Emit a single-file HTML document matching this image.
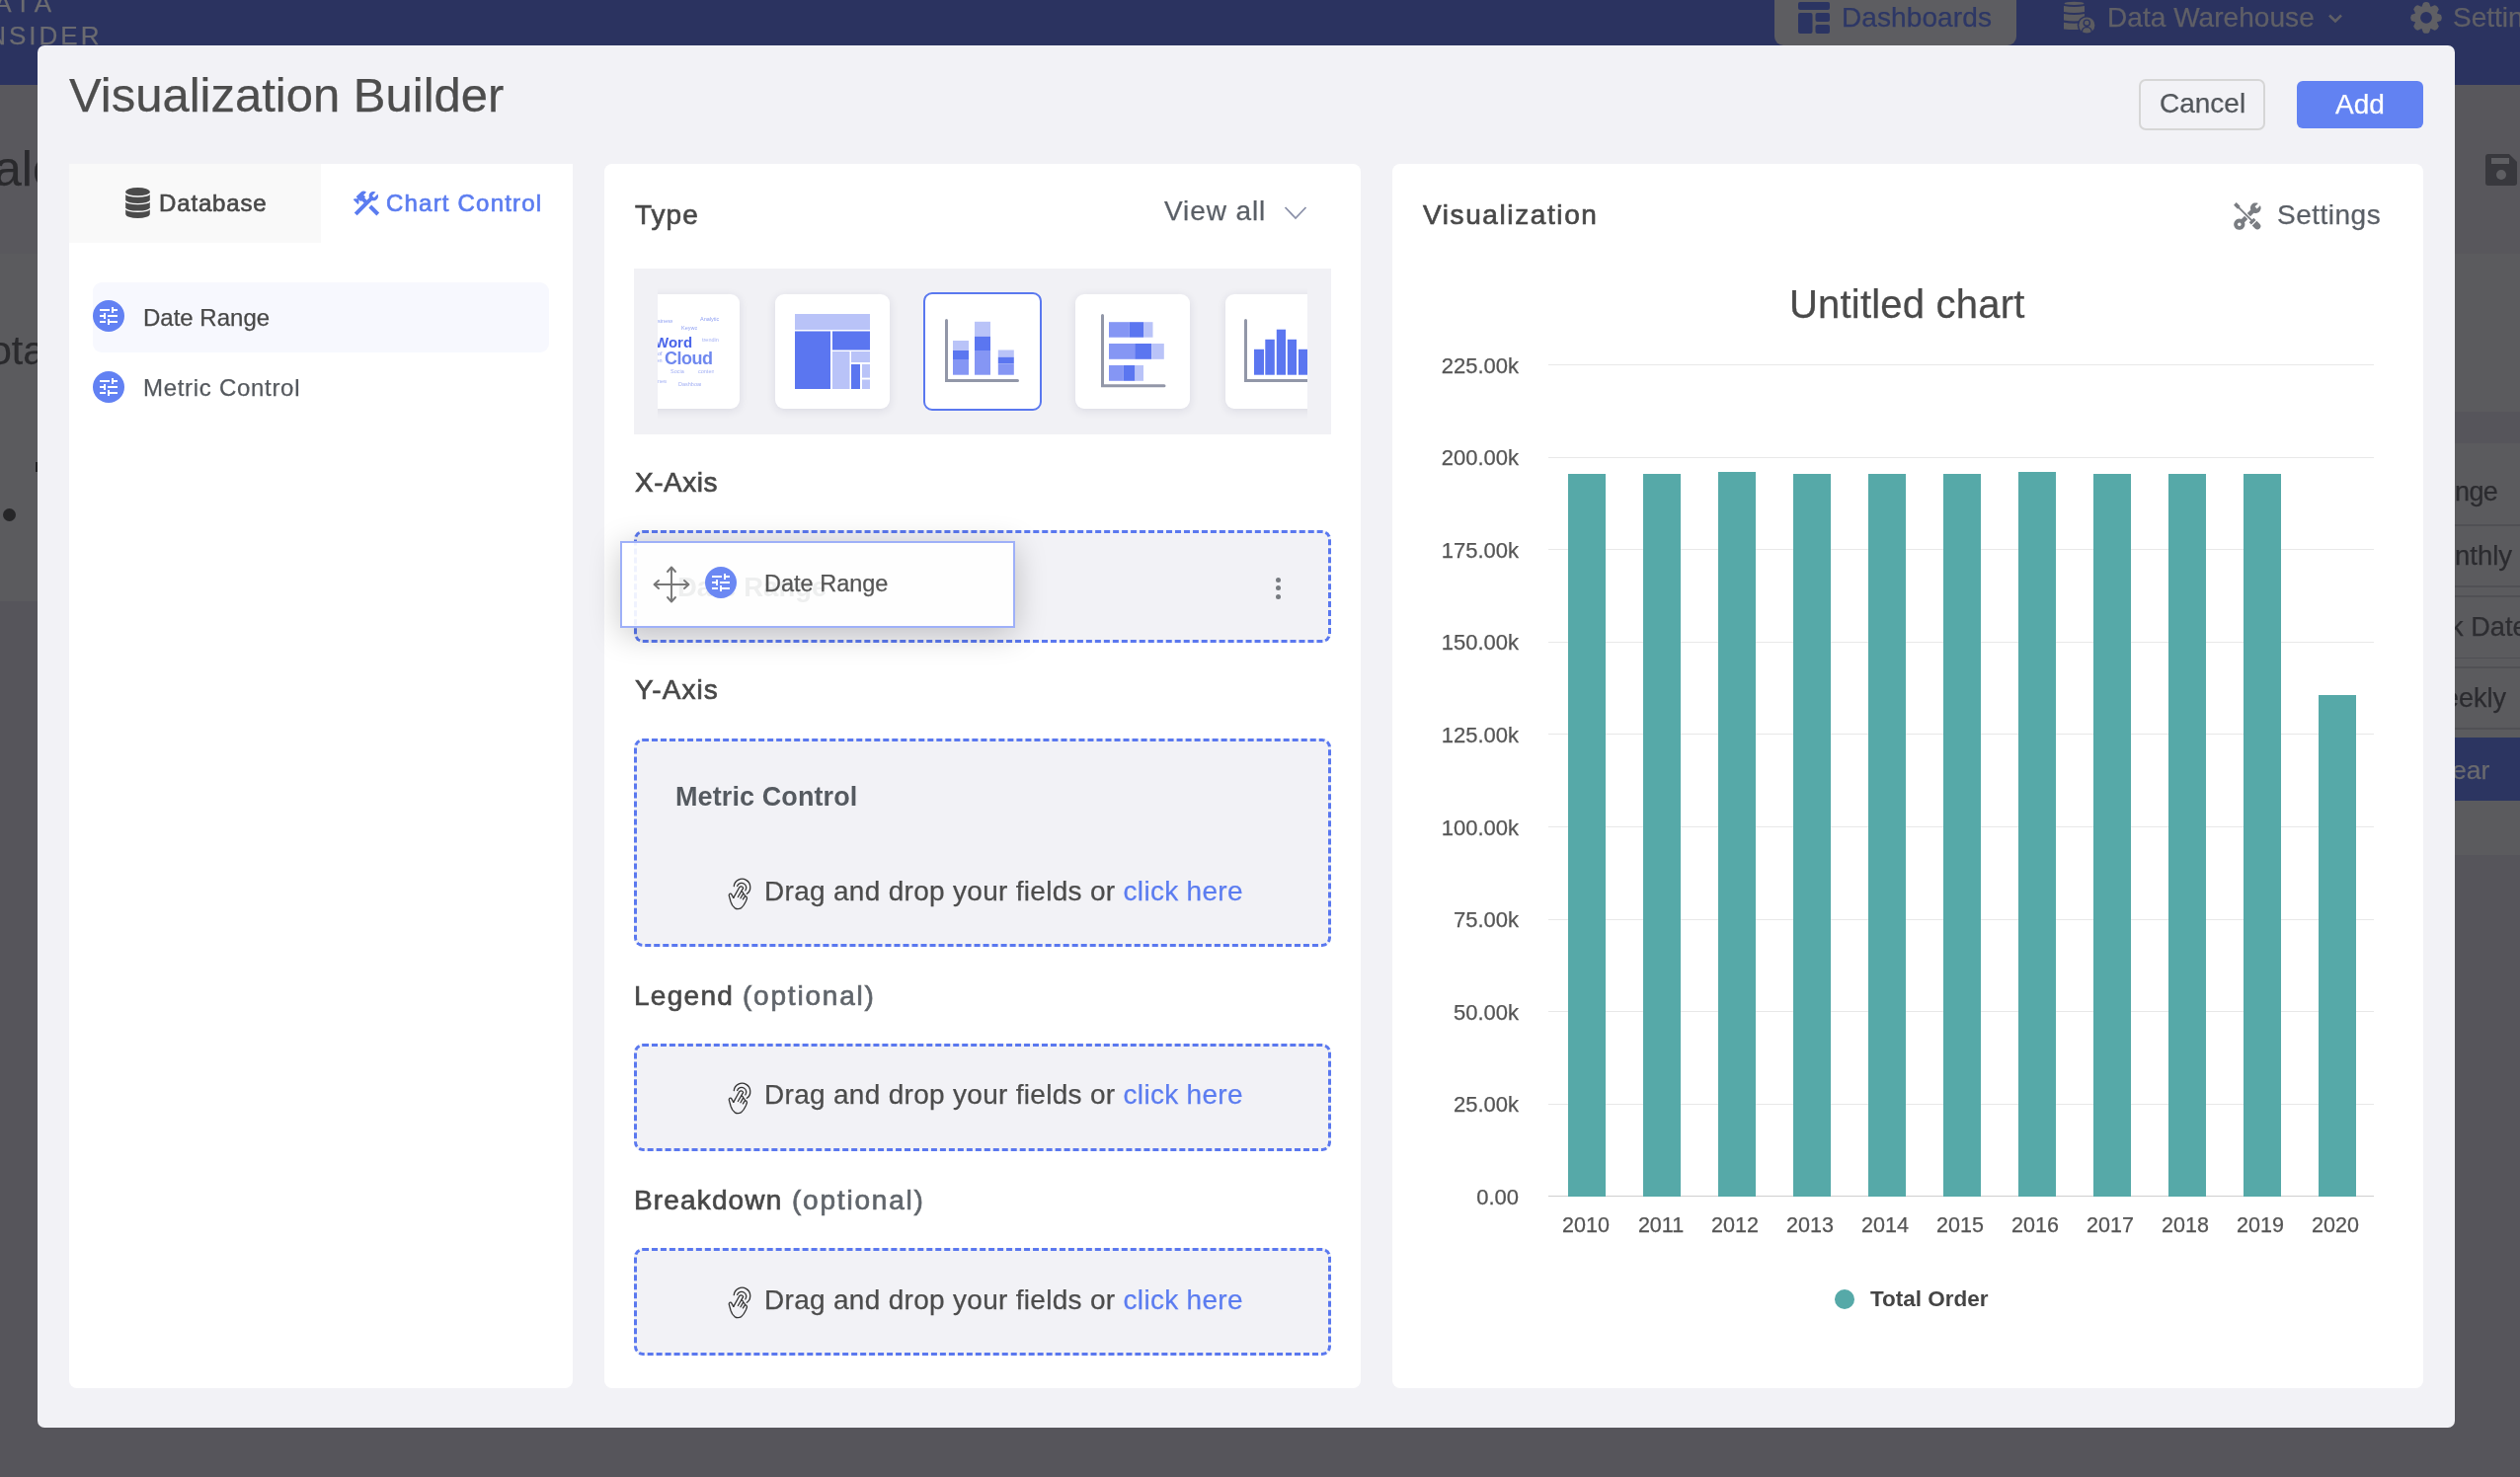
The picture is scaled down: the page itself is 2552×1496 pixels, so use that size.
<!DOCTYPE html>
<html><head><meta charset="utf-8"><style>
html,body{margin:0;padding:0;width:2552px;height:1496px;overflow:hidden;background:#56555b;font-family:'Liberation Sans', sans-serif;}
.t{position:absolute;white-space:nowrap;will-change:transform;-webkit-text-stroke:0.25px currentColor;}
.r{position:absolute;box-sizing:content-box;}
svg.r{display:block;}
</style></head><body>
<div class="r" style="left:0px;top:0px;width:2552px;height:86px;background:#2b3360;"></div>
<div class="r" style="left:0px;top:86px;width:2552px;height:1410px;background:#56555b;"></div>
<div class="r" style="left:0px;top:86px;width:38px;height:171px;background:#59585d;"></div>
<div class="r" style="left:0px;top:257px;width:38px;height:352px;background:#5b5b5e;"></div>
<div class="r" style="left:2486px;top:86px;width:66px;height:171px;background:#58575c;"></div>
<div class="r" style="left:2486px;top:257px;width:66px;height:160px;background:#5b5b5e;"></div>
<div class="r" style="left:2486px;top:417px;width:66px;height:32px;background:#56555b;"></div>
<div class="r" style="left:2486px;top:449px;width:66px;height:417px;background:#5b5b5e;"></div>
<div class="t" style="left:-30.0px;top:-9.6px;font-size:26px;line-height:26px;color:#6b6b70;font-weight:normal;letter-spacing:5.5px;">DATA</div>
<div class="t" style="left:-22.9px;top:22.6px;font-size:26px;line-height:26px;color:#6b6b70;font-weight:normal;letter-spacing:3.0px;">INSIDER</div>
<div class="r" style="left:1797px;top:-10px;width:245px;height:56px;background:#5d5d61;border-radius:0 0 9px 9px"></div>
<svg class="r" style="left:1821px;top:2px" width="32" height="32" viewBox="0 0 32 32" fill="#2b3462">
<rect x="0" y="0" width="32" height="8" rx="2"/><rect x="0" y="11" width="14.5" height="21" rx="2"/>
<rect x="17.5" y="11" width="14.5" height="9" rx="2"/><rect x="17.5" y="23" width="14.5" height="9" rx="2"/></svg>
<div class="t" style="left:1864.5px;top:4.0px;font-size:28px;line-height:28px;color:#2d3766;font-weight:normal;letter-spacing:0.1px;">Dashboards</div>
<svg class="r" style="left:2090px;top:0px" width="34" height="36" viewBox="0 0 34 36" fill="#5c5c60">
<ellipse cx="10.5" cy="3.4" rx="10" ry="1.7"/>
<path d="M0 6 Q10.5 8 21 6 V12 Q10.5 14 0 12 Z"/>
<path d="M0 14 Q10.5 16 21 14 V20.5 Q10.5 22.5 0 20.5 Z"/>
<path d="M0 22.8 Q10.5 24.8 21 22.8 V29.5 Q10.5 30.5 0 29.5 Z"/>
<circle cx="23.3" cy="25.5" r="9.6" fill="#2b3360"/>
<circle cx="23.3" cy="25.5" r="8.1"/>
<circle cx="23.3" cy="23.2" r="3.1" stroke="#2b3360" stroke-width="1.4"/>
<path d="M18.3 32 Q19 27.6 23.3 27.4 Q27.6 27.6 28.3 32" stroke="#2b3360" stroke-width="1.4"/>
</svg>
<div class="t" style="left:2133.5px;top:4.0px;font-size:28px;line-height:28px;color:#5f5f66;font-weight:normal;letter-spacing:0.05px;">Data Warehouse</div>
<svg class="r" style="left:2357px;top:12px" width="16" height="14" viewBox="0 0 16 14"><path d="M2 3.5 L8 9.5 L14 3.5" stroke="#5f5f66" stroke-width="2.6" fill="none"/></svg>
<svg class="r" style="left:2439px;top:0px" width="36" height="36" viewBox="-18 -18 36 36" fill="#5f5f64"><g transform="translate(0,-0.1)"><path d="M-5.2 -9 L-3 -15 Q0 -16.8 3 -15 L5.2 -9 Z" transform="rotate(0)"/><path d="M-5.2 -9 L-3 -15 Q0 -16.8 3 -15 L5.2 -9 Z" transform="rotate(45)"/><path d="M-5.2 -9 L-3 -15 Q0 -16.8 3 -15 L5.2 -9 Z" transform="rotate(90)"/><path d="M-5.2 -9 L-3 -15 Q0 -16.8 3 -15 L5.2 -9 Z" transform="rotate(135)"/><path d="M-5.2 -9 L-3 -15 Q0 -16.8 3 -15 L5.2 -9 Z" transform="rotate(180)"/><path d="M-5.2 -9 L-3 -15 Q0 -16.8 3 -15 L5.2 -9 Z" transform="rotate(225)"/><path d="M-5.2 -9 L-3 -15 Q0 -16.8 3 -15 L5.2 -9 Z" transform="rotate(270)"/><path d="M-5.2 -9 L-3 -15 Q0 -16.8 3 -15 L5.2 -9 Z" transform="rotate(315)"/><circle r="11.8"/><circle r="5.9" fill="#2b3360"/></g></svg>
<div class="t" style="left:2484.0px;top:4.0px;font-size:28px;line-height:28px;color:#5f5f66;font-weight:normal;letter-spacing:0px;">Settings</div>
<div class="t" style="left:-6.5px;top:145.8px;font-size:50px;line-height:50px;color:#2a2a2d;font-weight:normal;letter-spacing:0px;">alc</div>
<div class="t" style="left:-11.4px;top:334.6px;font-size:41px;line-height:41px;color:#2a2a2d;font-weight:normal;letter-spacing:0px;">ota</div>
<div class="r" style="left:35.5px;top:468px;width:3.5px;height:10px;background:#232325;"></div>
<div class="r" style="left:2.8px;top:514.6px;width:13px;height:13px;border-radius:50%;background:#262628"></div>
<svg class="r" style="left:2517px;top:156px" width="32" height="32" viewBox="0 0 32 32"><path d="M3 0 H24 L32 8 V29 A3 3 0 0 1 29 32 H3 A3 3 0 0 1 0 29 V3 A3 3 0 0 1 3 0 Z" fill="#38383d"/><rect x="6" y="4" width="18" height="6" fill="#5e5e62"/><circle cx="16" cy="21" r="5" fill="#5e5e62"/></svg>
<div class="t" style="left:2485.5px;top:485.1px;font-size:27px;line-height:27px;color:#2b2b2f;font-weight:normal;letter-spacing:-0.6px;">nge</div>
<div class="r" style="left:2486px;top:531px;width:66px;height:1.7999999999999545px;background:#505054;"></div>
<div class="t" style="left:2485.5px;top:548.6px;font-size:27.5px;line-height:27.5px;color:#2b2b2f;font-weight:normal;letter-spacing:0px;">nthly</div>
<div class="r" style="left:2486px;top:593px;width:66px;height:1.7999999999999545px;background:#505054;"></div>
<div class="r" style="left:2486px;top:603px;width:66px;height:1.7999999999999545px;background:#505054;"></div>
<div class="t" style="left:2481.1px;top:620.8px;font-size:27.2px;line-height:27.2px;color:#2d2d31;font-weight:normal;letter-spacing:0px;">k Date</div>
<div class="r" style="left:2486px;top:665.5px;width:66px;height:1.7000000000000455px;background:#505054;"></div>
<div class="r" style="left:2486px;top:675px;width:66px;height:1.7999999999999545px;background:#505054;"></div>
<div class="t" style="left:2474.8px;top:693.6px;font-size:27px;line-height:27px;color:#2b2b2f;font-weight:normal;letter-spacing:0px;">eekly</div>
<div class="r" style="left:2486px;top:737px;width:66px;height:1.7999999999999545px;background:#505054;"></div>
<div class="r" style="left:2486px;top:747px;width:66px;height:64px;background:#2c3561;"></div>
<div class="t" style="left:2483.2px;top:766.5px;font-size:26.5px;line-height:26.5px;color:#6a6a6e;font-weight:normal;letter-spacing:0px;">ear</div>
<div class="r" style="left:38px;top:46px;width:2448px;height:1400px;background:#f2f2f6;border-radius:7px"></div>
<div class="t" style="left:70.0px;top:72.1px;font-size:49px;line-height:49px;color:#4d4d4d;font-weight:normal;letter-spacing:0px;">Visualization Builder</div>
<div class="r" style="left:2166px;top:80px;width:123.5px;height:47.6px;border:2px solid #d6d6d6;border-radius:7px;background:#f2f2f6"></div>
<div class="t" style="left:2186.5px;top:91.4px;font-size:28px;line-height:28px;color:#53575c;font-weight:normal;letter-spacing:0px;">Cancel</div>
<div class="r" style="left:2326px;top:82px;width:128px;height:48px;background:#6282f2;border-radius:6px"></div>
<div class="t" style="left:2365.0px;top:91.8px;font-size:28px;line-height:28px;color:#ffffff;font-weight:normal;letter-spacing:0px;">Add</div>
<div class="r" style="left:70px;top:166px;width:510px;height:1240px;background:#fff;border-radius:0 0 8px 8px;overflow:hidden"><div class="r" style="left:0;top:0;width:255px;height:80px;background:#f9f9f9"></div></div>
<svg class="r" style="left:127px;top:190px" width="25" height="31" viewBox="0 0 25 31">
<path d="M0.2 4.3 A12.3 4.3 0 0 1 24.8 4.3 V26.7 A12.3 4.3 0 0 1 0.2 26.7 Z" fill="#4a4a4a"/>
<path d="M0 5.6 A12.5 3.4 0 0 0 25 5.6 M0 13.2 A12.5 3.4 0 0 0 25 13.2 M0 20.9 A12.5 3.4 0 0 0 25 20.9" stroke="#f9f9f9" stroke-width="1.4" fill="none"/></svg>
<div class="t" style="left:161.0px;top:194.2px;font-size:24px;line-height:24px;color:#484848;font-weight:normal;letter-spacing:0.85px;-webkit-text-stroke:0.65px #484848;">Database</div>
<svg class="r" style="left:355px;top:189.7px" width="32" height="32" viewBox="0 0 24 24"><path fill="#5b7cf0" d="M13.78 15.3l6 6 2.11-2.16-6-6-2.11 2.16zM17.5 10c1.93 0 3.5-1.57 3.5-3.5 0-.58-.16-1.12-.41-1.6l-2.7 2.7-1.49-1.49 2.7-2.7c-.48-.25-1.02-.41-1.6-.41C15.57 3 14 4.57 14 6.5c0 .41.08.8.21 1.16l-1.85 1.85-1.78-1.78.71-.71-1.41-1.41L12 3.49c-1.17-1.17-3.07-1.17-4.24 0L4.22 7.03l1.41 1.41H2.81l-.71.71 3.54 3.54.71-.71V9.15l1.41 1.41.71-.71 1.78 1.78-7.41 7.41 2.12 2.12L16.34 9.79c.36.13.75.21 1.16.21z"/></svg>
<div class="t" style="left:391.0px;top:194.2px;font-size:24px;line-height:24px;color:#5b7cf0;font-weight:normal;letter-spacing:1.2px;-webkit-text-stroke:0.65px #5b7cf0;">Chart Control</div>
<div class="r" style="left:94px;top:286px;width:462px;height:71px;background:#f7f8fe;border-radius:9px"></div>
<svg class="r" style="left:94px;top:304px" width="32" height="32" viewBox="0 0 32 32"><circle cx="16" cy="16" r="16" fill="#6281f3"/>
<g transform="translate(4,4)"><path fill="#fff" d="M3 17v2h6v-2H3zM3 5v2h10V5H3zm10 16v-2h8v-2h-8v-2h-2v6h2zM7 9v2H3v2h4v2h2V9H7zm14 4v-2H11v2h10zm-6-4h2V7h4V5h-4V3h-2v6z"/></g></svg>
<div class="t" style="left:145.0px;top:309.9px;font-size:24px;line-height:24px;color:#484848;font-weight:normal;letter-spacing:0px;">Date Range</div>
<svg class="r" style="left:94px;top:376px" width="32" height="32" viewBox="0 0 32 32"><circle cx="16" cy="16" r="16" fill="#6281f3"/>
<g transform="translate(4,4)"><path fill="#fff" d="M3 17v2h6v-2H3zM3 5v2h10V5H3zm10 16v-2h8v-2h-8v-2h-2v6h2zM7 9v2H3v2h4v2h2V9H7zm14 4v-2H11v2h10zm-6-4h2V7h4V5h-4V3h-2v6z"/></g></svg>
<div class="t" style="left:145.0px;top:381.4px;font-size:24px;line-height:24px;color:#55595e;font-weight:normal;letter-spacing:0.7px;">Metric Control</div>
<div class="r" style="left:612px;top:166px;width:766px;height:1240px;background:#fff;border-radius:8px"></div>
<div class="t" style="left:643.0px;top:204.4px;font-size:28px;line-height:28px;color:#484848;font-weight:normal;letter-spacing:1.0px;-webkit-text-stroke:0.65px #484848;">Type</div>
<div class="t" style="left:1179.0px;top:200.4px;font-size:28px;line-height:28px;color:#5a5f66;font-weight:normal;letter-spacing:0.9px;">View all</div>
<svg class="r" style="left:1300px;top:208px" width="24" height="16" viewBox="0 0 24 16"><path d="M1.5 2 L12 13 L22.5 2" stroke="#8a90a8" stroke-width="1.8" fill="none"/></svg>
<div class="r" style="left:642px;top:272px;width:706px;height:168px;background:#f1f1f5;"></div>
<div class="r" style="left:666px;top:272px;width:658px;height:168px;overflow:hidden">
<div style="position:absolute;top:26px;width:116px;height:116px;background:#fff;border-radius:9px;box-shadow:0 2px 10px rgba(40,40,80,0.11);left:-33px;overflow:hidden">
<div class="t" style="left:29.6px;top:41.35px;font-size:15px;line-height:15px;color:#4b66ea;font-weight:bold;-webkit-text-stroke:0">Word</div>
<div class="t" style="left:40px;top:55.7px;font-size:18px;line-height:18px;color:#6f88ef;font-weight:bold;letter-spacing:-0.5px;-webkit-text-stroke:0">Cloud</div>
<div class="t" style="left:27px;top:25px;font-size:5.5px;line-height:5.5px;color:#8e9ff2;width:21.200000000000003px;overflow:hidden;-webkit-text-stroke:0">business</div>
<div class="t" style="left:76px;top:23px;font-size:5.5px;line-height:5.5px;color:#8e9ff2;width:18.700000000000003px;overflow:hidden;-webkit-text-stroke:0">Analytics</div>
<div class="t" style="left:57px;top:32px;font-size:5.5px;line-height:5.5px;color:#8e9ff2;width:16px;overflow:hidden;-webkit-text-stroke:0">Keyword</div>
<div class="t" style="left:77.8px;top:43.5px;font-size:5.5px;line-height:5.5px;color:#a3b0f4;width:16.900000000000006px;overflow:hidden;-webkit-text-stroke:0">trending</div>
<div class="t" style="left:33px;top:57.5px;font-size:5.5px;line-height:5.5px;color:#8e9ff2;width:6px;overflow:hidden;-webkit-text-stroke:0">of</div>
<div class="t" style="left:30px;top:65px;font-size:5.5px;line-height:5.5px;color:#8e9ff2;width:9px;overflow:hidden;-webkit-text-stroke:0">ten</div>
<div class="t" style="left:46px;top:76px;font-size:5.5px;line-height:5.5px;color:#a3b0f4;width:13.600000000000001px;overflow:hidden;-webkit-text-stroke:0">Social</div>
<div class="t" style="left:74px;top:76px;font-size:5.5px;line-height:5.5px;color:#a3b0f4;width:16px;overflow:hidden;-webkit-text-stroke:0">content</div>
<div class="t" style="left:33px;top:86px;font-size:5.5px;line-height:5.5px;color:#a3b0f4;width:8.799999999999997px;overflow:hidden;-webkit-text-stroke:0">newy</div>
<div class="t" style="left:54px;top:89px;font-size:5.5px;line-height:5.5px;color:#a3b0f4;width:23px;overflow:hidden;-webkit-text-stroke:0">Dashboard</div>
</div>
<div style="position:absolute;top:26px;width:116px;height:116px;background:#fff;border-radius:9px;box-shadow:0 2px 10px rgba(40,40,80,0.11);left:119px"><svg style="position:absolute;left:20px;top:20px" width="76" height="76" viewBox="0 0 76 76"><rect x="0" y="0" width="76" height="16" fill="#b9c3f8"/><rect x="0" y="17.5" width="36" height="58.5" fill="#5b76f0"/><rect x="38" y="17.5" width="38" height="19" fill="#5b76f0"/><rect x="38" y="38" width="17.5" height="38" fill="#b9c3f8"/><rect x="57" y="38" width="19" height="11" fill="#b9c3f8"/><rect x="57" y="51" width="9" height="25" fill="#5b76f0"/><rect x="68" y="51" width="8" height="13.6" fill="#b9c3f8"/><rect x="68" y="66.5" width="8" height="9.5" fill="#b9c3f8"/></svg></div>
<div style="position:absolute;top:26px;width:116px;height:116px;background:#fff;border-radius:9px;box-shadow:0 2px 10px rgba(40,40,80,0.11);left:269px;top:24px;width:116px;height:116px;border:2px solid #5a78ef;box-shadow:none"><svg style="position:absolute;left:20px;top:25px" width="80" height="70" viewBox="0 0 80 70"><path d="M1.5 1.5 V62.5 H73.5" stroke="#9297a8" stroke-width="3" stroke-linecap="round" fill="none"/><rect x="8" y="22" width="16" height="10" fill="#b9c3f8"/><rect x="8" y="32" width="16" height="9" fill="#5b76f0"/><rect x="8" y="41" width="16" height="15.7" fill="#8596f4"/><rect x="30" y="2.8" width="16" height="15" fill="#b9c3f8"/><rect x="30" y="17.8" width="16" height="14.2" fill="#5b76f0"/><rect x="30" y="32" width="16" height="24.7" fill="#8596f4"/><rect x="53.8" y="31.5" width="16" height="7.2" fill="#b9c3f8"/><rect x="53.8" y="38.7" width="16" height="6.6" fill="#5b76f0"/><rect x="53.8" y="45.3" width="16" height="11.4" fill="#8596f4"/></svg></div>
<div style="position:absolute;top:26px;width:116px;height:116px;background:#fff;border-radius:9px;box-shadow:0 2px 10px rgba(40,40,80,0.11);left:423px"><svg style="position:absolute;left:26px;top:20px" width="72" height="80" viewBox="0 0 72 80"><path d="M1.5 1.5 V72.8 H64" stroke="#9297a8" stroke-width="3" stroke-linecap="round" fill="none"/><rect x="8" y="8.2" width="20.8" height="15.5" fill="#8596f4"/><rect x="28.8" y="8.2" width="14.2" height="15.5" fill="#5b76f0"/><rect x="43" y="8.2" width="9.5" height="15.5" fill="#b9c3f8"/><rect x="8" y="30" width="26.2" height="15.8" fill="#8596f4"/><rect x="34.2" y="30" width="17.1" height="15.8" fill="#5b76f0"/><rect x="51.3" y="30" width="12.5" height="15.8" fill="#b9c3f8"/><rect x="8" y="52" width="14.8" height="15.8" fill="#8596f4"/><rect x="22.8" y="52" width="11.7" height="15.8" fill="#5b76f0"/><rect x="34.5" y="52" width="8.5" height="15.8" fill="#b9c3f8"/></svg></div>
<div style="position:absolute;top:26px;width:116px;height:116px;background:#fff;border-radius:9px;box-shadow:0 2px 10px rgba(40,40,80,0.11);left:575px"><svg style="position:absolute;left:19px;top:25px" width="97" height="66" viewBox="0 0 97 66"><path d="M1.5 1.5 V62.5 H120" stroke="#9297a8" stroke-width="3" stroke-linecap="round" fill="none"/><rect x="10" y="30.8" width="10" height="25.9" fill="#5b76f0"/><rect x="21.3" y="20.8" width="9.5" height="35.9" fill="#5b76f0"/><rect x="32.8" y="10.7" width="9.2" height="46" fill="#5b76f0"/><rect x="43.8" y="20.8" width="9.2" height="35.9" fill="#5b76f0"/><rect x="55" y="30.8" width="10" height="25.9" fill="#5b76f0"/></svg></div>
</div>
<div class="t" style="left:643.0px;top:474.6px;font-size:28px;line-height:28px;color:#484848;font-weight:normal;letter-spacing:0.5px;-webkit-text-stroke:0.65px #484848;">X-Axis</div>
<div class="r" style="left:642px;top:537px;width:700px;height:108px;border:3px dashed #5a78ef;border-radius:9px;background:#f2f2f6"></div>
<div class="r" style="left:1291.5px;top:584.5px;width:5px;height:5px;border-radius:50%;background:#777b80"></div>
<div class="r" style="left:1291.5px;top:593.2px;width:5px;height:5px;border-radius:50%;background:#777b80"></div>
<div class="r" style="left:1291.5px;top:602.1px;width:5px;height:5px;border-radius:50%;background:#777b80"></div>
<div class="r" style="left:628px;top:548px;width:396px;height:84px;border:2px solid #9eb0f8;background:rgba(255,255,255,0.9);box-shadow:0 6px 32px rgba(0,0,0,0.22)"></div>
<div class="t" style="left:686.0px;top:581.1px;font-size:27.5px;line-height:27.5px;color:#eeefef;font-weight:bold;letter-spacing:0px;-webkit-text-stroke:0;">Date Range</div>
<svg class="r" style="left:660px;top:572px" width="40" height="40" viewBox="0 0 40 40"><g stroke="#777" stroke-width="1.9" fill="none" stroke-linecap="round" stroke-linejoin="round">
<path d="M20 3 V37 M3 20 H37"/><path d="M16 7 L20 2.5 L24 7"/><path d="M16 33 L20 37.5 L24 33"/><path d="M7 16 L2.5 20 L7 24"/><path d="M33 16 L37.5 20 L33 24"/></g></svg>
<svg class="r" style="left:714px;top:574px" width="32" height="32" viewBox="0 0 32 32"><circle cx="16" cy="16" r="16" fill="#6b88f3"/>
<g transform="translate(4,4)"><path fill="#fff" d="M3 17v2h6v-2H3zM3 5v2h10V5H3zm10 16v-2h8v-2h-8v-2h-2v6h2zM7 9v2H3v2h4v2h2V9H7zm14 4v-2H11v2h10zm-6-4h2V7h4V5h-4V3h-2v6z"/></g></svg>
<div class="t" style="left:773.7px;top:580.3px;font-size:23.5px;line-height:23.5px;color:#555555;font-weight:normal;letter-spacing:0px;">Date Range</div>
<div class="t" style="left:643.0px;top:684.8px;font-size:28px;line-height:28px;color:#484848;font-weight:normal;letter-spacing:1.1px;-webkit-text-stroke:0.65px #484848;">Y-Axis</div>
<div class="r" style="left:642px;top:748px;width:700px;height:205px;border:3px dashed #5a78ef;border-radius:9px;background:#f2f2f6"></div>
<div class="t" style="left:684.0px;top:793.6px;font-size:27px;line-height:27px;color:#555a60;font-weight:bold;letter-spacing:0.1px;-webkit-text-stroke:0;">Metric Control</div>
<div class="t" style="left:773.7px;top:888.9px;font-size:28px;line-height:28px;color:#4c4c4c;letter-spacing:0.3px">Drag and drop your fields or <span style="color:#5b7cf0">click here</span></div>
<svg class="r" style="left:730px;top:880px" width="40" height="45" viewBox="0 0 1313 1477"><g stroke="#333" stroke-width="42" fill="none" stroke-linecap="round" stroke-linejoin="round">
<path d="M435 580 A272 272 0 1 1 865 830"/>
<path d="M545 575 A155 155 0 1 1 815 720"/>
<path d="M420 965 L615 615 Q680 555 745 635 L570 935"/>
<path d="M690 752 Q735 770 748 815 L655 975"/>
<path d="M748 835 Q795 850 805 905 L735 1015"/>
<path d="M805 905 Q865 915 870 975 L830 1080 Q760 1230 680 1300 Q560 1370 460 1300 Q370 1230 330 1100 L270 880 Q285 805 345 835 L420 965"/>
</g></svg>
<div class="t" style="left:641.5px;top:994.9px;font-size:28px;line-height:28px;color:#484848;font-weight:normal;letter-spacing:1.3px;-webkit-text-stroke:0.65px #484848;">Legend</div>
<div class="t" style="left:751.5px;top:994.9px;font-size:28px;line-height:28px;color:#60656b;font-weight:normal;letter-spacing:1.8px;-webkit-text-stroke:0.65px #60656b;">(optional)</div>
<div class="r" style="left:642px;top:1057px;width:700px;height:103px;border:3px dashed #5a78ef;border-radius:9px;background:#f2f2f6"></div>
<div class="t" style="left:773.7px;top:1095.4px;font-size:28px;line-height:28px;color:#4c4c4c;letter-spacing:0.3px">Drag and drop your fields or <span style="color:#5b7cf0">click here</span></div>
<svg class="r" style="left:730px;top:1086.5px" width="40" height="45" viewBox="0 0 1313 1477"><g stroke="#333" stroke-width="42" fill="none" stroke-linecap="round" stroke-linejoin="round">
<path d="M435 580 A272 272 0 1 1 865 830"/>
<path d="M545 575 A155 155 0 1 1 815 720"/>
<path d="M420 965 L615 615 Q680 555 745 635 L570 935"/>
<path d="M690 752 Q735 770 748 815 L655 975"/>
<path d="M748 835 Q795 850 805 905 L735 1015"/>
<path d="M805 905 Q865 915 870 975 L830 1080 Q760 1230 680 1300 Q560 1370 460 1300 Q370 1230 330 1100 L270 880 Q285 805 345 835 L420 965"/>
</g></svg>
<div class="t" style="left:641.5px;top:1202.0px;font-size:28px;line-height:28px;color:#484848;font-weight:normal;letter-spacing:1.15px;-webkit-text-stroke:0.65px #484848;">Breakdown</div>
<div class="t" style="left:802.0px;top:1202.0px;font-size:28px;line-height:28px;color:#60656b;font-weight:normal;letter-spacing:1.8px;-webkit-text-stroke:0.65px #60656b;">(optional)</div>
<div class="r" style="left:642px;top:1264px;width:700px;height:103px;border:3px dashed #5a78ef;border-radius:9px;background:#f2f2f6"></div>
<div class="t" style="left:773.7px;top:1303.0px;font-size:28px;line-height:28px;color:#4c4c4c;letter-spacing:0.3px">Drag and drop your fields or <span style="color:#5b7cf0">click here</span></div>
<svg class="r" style="left:730px;top:1294.1px" width="40" height="45" viewBox="0 0 1313 1477"><g stroke="#333" stroke-width="42" fill="none" stroke-linecap="round" stroke-linejoin="round">
<path d="M435 580 A272 272 0 1 1 865 830"/>
<path d="M545 575 A155 155 0 1 1 815 720"/>
<path d="M420 965 L615 615 Q680 555 745 635 L570 935"/>
<path d="M690 752 Q735 770 748 815 L655 975"/>
<path d="M748 835 Q795 850 805 905 L735 1015"/>
<path d="M805 905 Q865 915 870 975 L830 1080 Q760 1230 680 1300 Q560 1370 460 1300 Q370 1230 330 1100 L270 880 Q285 805 345 835 L420 965"/>
</g></svg>
<div class="r" style="left:1410px;top:166px;width:1044px;height:1240px;background:#fff;border-radius:8px"></div>
<div class="t" style="left:1441.0px;top:204.1px;font-size:28px;line-height:28px;color:#484848;font-weight:normal;letter-spacing:1.6px;-webkit-text-stroke:0.65px #484848;">Visualization</div>
<svg class="r" style="left:2261.6px;top:204.75px" width="29" height="29" viewBox="0 0 29 29" fill="#7a7d82">
<g transform="rotate(45)">
<path d="M2 -1.9 H7.6 V1.9 H2 Z M7.5 -0.9 H26 V0.9 H7.5 Z M25.5 -3.3 H28.6 V3.3 H25.5 Z M29.8 -3.3 H34 A3.3 3.3 0 0 1 34 3.3 H29.8 Z"/>
</g>
<g transform="translate(28,0) rotate(135)">
<path d="M8.1 -5.3 A5.3 5.3 0 1 1 8.09 -5.3 Z"/><path fill="#fff" d="M1.5 -1.5 H7.6 V1.5 H1.5 Z"/>
<path d="M11 -2.2 H17.9 V2.2 H11 Z M21.7 -2.2 H27 V2.2 H21.7 Z"/>
<path fill-rule="evenodd" d="M31.4 -5.6 A5.6 5.6 0 1 1 31.39 -5.6 Z M31.4 -1.8 A1.8 1.8 0 1 0 31.41 -1.8 Z"/>
</g></svg>
<div class="t" style="left:2305.8px;top:204.0px;font-size:28px;line-height:28px;color:#5a5f66;font-weight:normal;letter-spacing:0.5px;">Settings</div>
<div class="t" style="left:1811.5px;top:288.3px;font-size:40px;line-height:40px;color:#4a4a4a;font-weight:normal;letter-spacing:0.2px;">Untitled chart</div>
<div class="r" style="left:1568px;top:369px;width:836px;height:1px;background:#e8e8e8;"></div>
<div class="t" style="left:1338px;width:200px;text-align:right;top:359.6px;font-size:22px;line-height:22px;color:#555">225.00k</div>
<div class="r" style="left:1568px;top:463px;width:836px;height:1px;background:#e8e8e8;"></div>
<div class="t" style="left:1338px;width:200px;text-align:right;top:453.2px;font-size:22px;line-height:22px;color:#555">200.00k</div>
<div class="r" style="left:1568px;top:556px;width:836px;height:1px;background:#e8e8e8;"></div>
<div class="t" style="left:1338px;width:200px;text-align:right;top:546.8px;font-size:22px;line-height:22px;color:#555">175.00k</div>
<div class="r" style="left:1568px;top:650px;width:836px;height:1px;background:#e8e8e8;"></div>
<div class="t" style="left:1338px;width:200px;text-align:right;top:640.4px;font-size:22px;line-height:22px;color:#555">150.00k</div>
<div class="r" style="left:1568px;top:743px;width:836px;height:1px;background:#e8e8e8;"></div>
<div class="t" style="left:1338px;width:200px;text-align:right;top:734.0px;font-size:22px;line-height:22px;color:#555">125.00k</div>
<div class="r" style="left:1568px;top:837px;width:836px;height:1px;background:#e8e8e8;"></div>
<div class="t" style="left:1338px;width:200px;text-align:right;top:827.6px;font-size:22px;line-height:22px;color:#555">100.00k</div>
<div class="r" style="left:1568px;top:931px;width:836px;height:1px;background:#e8e8e8;"></div>
<div class="t" style="left:1338px;width:200px;text-align:right;top:921.2px;font-size:22px;line-height:22px;color:#555">75.00k</div>
<div class="r" style="left:1568px;top:1024px;width:836px;height:1px;background:#e8e8e8;"></div>
<div class="t" style="left:1338px;width:200px;text-align:right;top:1014.8px;font-size:22px;line-height:22px;color:#555">50.00k</div>
<div class="r" style="left:1568px;top:1118px;width:836px;height:1px;background:#e8e8e8;"></div>
<div class="t" style="left:1338px;width:200px;text-align:right;top:1108.4px;font-size:22px;line-height:22px;color:#555">25.00k</div>
<div class="r" style="left:1568px;top:1211px;width:836px;height:1px;background:#cfcfcf;"></div>
<div class="t" style="left:1338px;width:200px;text-align:right;top:1202.0px;font-size:22px;line-height:22px;color:#555">0.00</div>
<div class="r" style="left:1588.0px;top:480px;width:38px;height:732px;background:#56a9a8"></div>
<div class="t" style="left:1555.5px;width:100px;text-align:center;top:1230.8px;font-size:21.5px;line-height:21.5px;color:#555">2010</div>
<div class="r" style="left:1664.0px;top:480px;width:38px;height:732px;background:#56a9a8"></div>
<div class="t" style="left:1631.5px;width:100px;text-align:center;top:1230.8px;font-size:21.5px;line-height:21.5px;color:#555">2011</div>
<div class="r" style="left:1739.9px;top:478px;width:38px;height:734px;background:#56a9a8"></div>
<div class="t" style="left:1707.4px;width:100px;text-align:center;top:1230.8px;font-size:21.5px;line-height:21.5px;color:#555">2012</div>
<div class="r" style="left:1815.9px;top:480px;width:38px;height:732px;background:#56a9a8"></div>
<div class="t" style="left:1783.4px;width:100px;text-align:center;top:1230.8px;font-size:21.5px;line-height:21.5px;color:#555">2013</div>
<div class="r" style="left:1891.9px;top:480px;width:38px;height:732px;background:#56a9a8"></div>
<div class="t" style="left:1859.4px;width:100px;text-align:center;top:1230.8px;font-size:21.5px;line-height:21.5px;color:#555">2014</div>
<div class="r" style="left:1967.8px;top:480px;width:38px;height:732px;background:#56a9a8"></div>
<div class="t" style="left:1935.3px;width:100px;text-align:center;top:1230.8px;font-size:21.5px;line-height:21.5px;color:#555">2015</div>
<div class="r" style="left:2043.8px;top:478px;width:38px;height:734px;background:#56a9a8"></div>
<div class="t" style="left:2011.3px;width:100px;text-align:center;top:1230.8px;font-size:21.5px;line-height:21.5px;color:#555">2016</div>
<div class="r" style="left:2119.8px;top:480px;width:38px;height:732px;background:#56a9a8"></div>
<div class="t" style="left:2087.3px;width:100px;text-align:center;top:1230.8px;font-size:21.5px;line-height:21.5px;color:#555">2017</div>
<div class="r" style="left:2195.8px;top:480px;width:38px;height:732px;background:#56a9a8"></div>
<div class="t" style="left:2163.3px;width:100px;text-align:center;top:1230.8px;font-size:21.5px;line-height:21.5px;color:#555">2018</div>
<div class="r" style="left:2271.7px;top:480px;width:38px;height:732px;background:#56a9a8"></div>
<div class="t" style="left:2239.2px;width:100px;text-align:center;top:1230.8px;font-size:21.5px;line-height:21.5px;color:#555">2019</div>
<div class="r" style="left:2347.7px;top:703.7px;width:38px;height:508.29999999999995px;background:#56a9a8"></div>
<div class="t" style="left:2315.2px;width:100px;text-align:center;top:1230.8px;font-size:21.5px;line-height:21.5px;color:#555">2020</div>
<div class="r" style="left:1858px;top:1306px;width:20px;height:20px;border-radius:50%;background:#56a9a8"></div>
<div class="t" style="left:1894.0px;top:1304.6px;font-size:22.5px;line-height:22.5px;color:#444444;font-weight:bold;letter-spacing:0px;-webkit-text-stroke:0;">Total Order</div>
</body></html>
